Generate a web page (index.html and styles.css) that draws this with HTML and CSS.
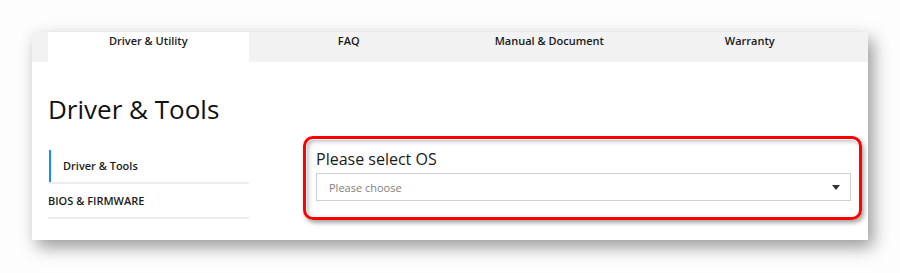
FILE: index.html
```html
<!DOCTYPE html>
<html lang="en">
<head>
    <meta charset="UTF-8">
    <meta name="viewport" content="width=device-width, initial-scale=1.0">
    <title>Driver & Tools</title>
    <link rel="stylesheet" href="styles.css">
</head>
<body>
    <div class="card">
        <div class="tabs">
            <div class="tab active">Driver &amp; Utility</div>
            <div class="tab">FAQ</div>
            <div class="tab">Manual &amp; Document</div>
            <div class="tab">Warranty</div>
        </div>

        <div class="content">
            <h1>Driver &amp; Tools</h1>
            <div class="row">
                <ul class="side">
                    <li class="side-item current">Driver &amp; Tools</li>
                    <li class="side-item">BIOS &amp; FIRMWARE</li>
                </ul>

                <!-- highlighted area -->
                <div class="mark">
                    <div class="os-title">Please select OS</div>
                    <div class="select">
                        <span class="placeholder">Please choose</span>
                        <span class="caret"></span>
                    </div>
                </div>
            </div>
        </div>
    </div>
</body>
</html>
```

FILE: styles.css
```css
body {
    margin: 0;
    padding: 32px;
    background-color: #fdfdfd;
    font-family: "Open Sans", "Noto Sans", Arial, sans-serif;
    color: #1a1a1a;
}
.card {
    width: 836px;
    height: 208px;
    background: white;
    box-shadow: 5px 7px 16px rgba(0,0,0,0.4);
}
.tabs {
    display: flex;
    height: 30px;
    padding: 0 18px 0 16px;
    background-color: #f2f2f2;
}
.tab {
    flex: 1;
    text-align: center;
    font-size: 11px;
    font-weight: 600;
    line-height: 13px;
    padding-top: 2px;
}
.tab.active {
    background: white;
}
.content {
    padding: 0 16px;
}
h1 {
    margin: 0;
    padding-top: 30px;
    font-size: 26px;
    font-weight: 400;
    line-height: 34px;
    color: #111;
}
.row {
    display: flex;
    align-items: flex-start;
    gap: 54px;
    margin-top: 10px;
}
.side {
    list-style: none;
    margin: 14px 0 0;
    padding: 0;
    width: 201px;
    flex-shrink: 0;
}
.side-item {
    font-size: 11px;
    font-weight: 600;
    line-height: 14px;
    padding: 10px 0 9px;
    border-bottom: 2px solid #ececec;
}
.side-item.current {
    margin-left: 1px;
    padding: 9px 0 9px 12px;
    border-left: 2px solid #1a8cff;
    border-bottom: none;
    box-shadow: 0 2px 0 #ececec;
    margin-bottom: 2px;
}
.mark {
    flex-shrink: 0;
    width: 535px;
    padding: 9px 8px 16px 10px;
    border: 3px solid #ff0000;
    border-radius: 10px;
    box-shadow: 2px 3px 4px rgba(0,0,0,0.35), inset 0 0 0 1px white, inset 2px 2px 5px rgba(0,0,0,0.3);
}
.os-title {
    font-size: 16px;
    line-height: 22px;
    margin-bottom: 3px;
}
.select {
    display: flex;
    align-items: center;
    justify-content: space-between;
    height: 26px;
    padding: 0 10px 0 12px;
    border: 1px solid #d0d0d0;
}
.placeholder {
    font-size: 11px;
    color: #808080;
}
.caret {
    width: 0;
    height: 0;
    border-left: 4px solid transparent;
    border-right: 4px solid transparent;
    border-top: 5px solid #333;
}
```
